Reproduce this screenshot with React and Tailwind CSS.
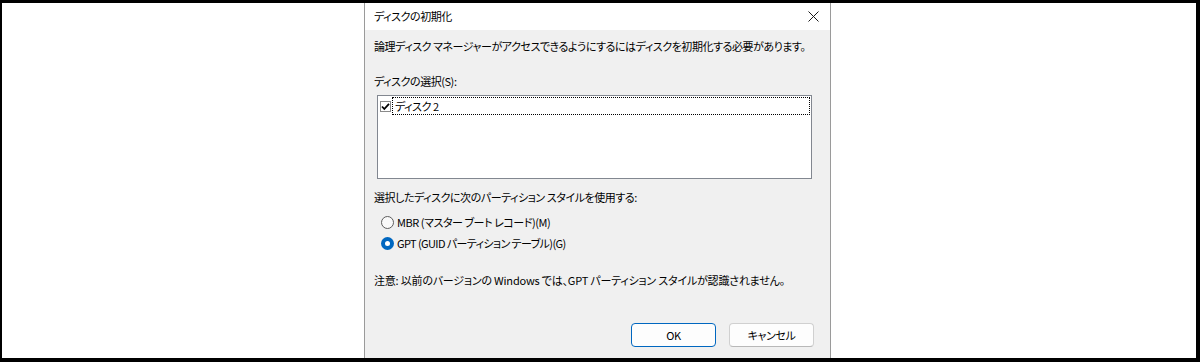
import React from 'react';

const font = "font-['Noto_Sans_CJK_JP','Noto_Sans',sans-serif] [font-feature-settings:'palt']";

const Radio = ({ checked, label }) => (
    <div className="flex items-center h-[18px]">
        {checked ? (
            <span className="ml-[7px] size-[13px] rounded-full bg-[#0067c0] flex items-center justify-center">
                <span className="size-[5px] rounded-full bg-white" />
            </span>
        ) : (
            <span className="ml-[7px] size-[13px] rounded-full border border-[#5d5d5d] bg-[#f9f9f9]" />
        )}
        <span className="ml-[3px]">{label}</span>
    </div>
);

const App = () => {
    return (
        <div className={`w-[1200px] h-[362px] bg-black pt-[3px] pl-[2px] pr-[4px] pb-[4px] ${font} text-[11px] tracking-[-0.45px] whitespace-nowrap text-black`}>
            <div className="w-full h-full bg-white overflow-hidden">
                <div className="ml-[362px] w-[467px] h-full flex flex-col border-x border-[#9a9a9a] bg-[#f0f0f0]">
                    {/* title bar */}
                    <div className="h-[27px] shrink-0 bg-white flex items-center justify-between pl-[9px] pr-[9px]">
                        <span>ディスクの初期化</span>
                        <svg width="11" height="11" viewBox="0 0 11 11" className="mr-[2px]">
                            <path d="M0.5 0.5 L10.5 10.5 M10.5 0.5 L0.5 10.5" stroke="#1a1a1a" strokeWidth="1" fill="none" />
                        </svg>
                    </div>

                    <div className="pl-[9px] leading-[18px]">
                        <div className="mt-[7px] h-[18px]">
                            論理ディスク マネージャーがアクセスできるようにするにはディスクを初期化する必要があります。
                        </div>
                        <div className="mt-[17px] h-[18px]">ディスクの選択(S):</div>

                        <div className="mt-[5px] ml-[3px] w-[435px] h-[84px] border border-[#828790] bg-white">
                            <div className="flex items-center h-[18px] mt-[1px]">
                                <svg width="11" height="11" viewBox="0 0 11 11" className="ml-[2px] shrink-0">
                                    <rect x="0.5" y="0.5" width="10" height="10" fill="white" stroke="#8a8a8a" />
                                    <path d="M2 5.5 L4.3 8 L9 2.8" stroke="black" strokeWidth="1.8" fill="none" />
                                </svg>
                                <div className="flex-1 h-full ml-[1px] mr-[1px] border border-dotted border-black flex items-center pl-[2px]">
                                    ディスク&nbsp;2
                                </div>
                            </div>
                        </div>

                        <div className="mt-[9px] h-[18px]">選択したディスクに次のパーティション スタイルを使用する:</div>
                        <div className="mt-[7px]">
                            <Radio label="MBR (マスター ブート レコード)(M)" />
                        </div>
                        <div className="mt-[3px] tracking-[-0.6px]">
                            <Radio checked label="GPT (GUID パーティション テーブル)(G)" />
                        </div>
                        <div className="mt-[19px] h-[18px] tracking-[-0.2px]">
                            注意: 以前のバージョンの Windows では、GPT パーティション スタイルが認識されません。
                        </div>
                    </div>

                    <div className="mt-[34px] flex justify-end gap-[13px] pr-[16px]">
                        <button className="w-[85px] h-[24px] rounded-[4px] border border-[#0067c0] bg-[#fdfdfd] flex items-center justify-center">
                            OK
                        </button>
                        <button className="w-[85px] h-[24px] rounded-[4px] border border-[#d0d0d0] border-b-[#b8b8b8] bg-[#fdfdfd] flex items-center justify-center">
                            キャンセル
                        </button>
                    </div>
                </div>
            </div>
        </div>
    );
};

export default App;
